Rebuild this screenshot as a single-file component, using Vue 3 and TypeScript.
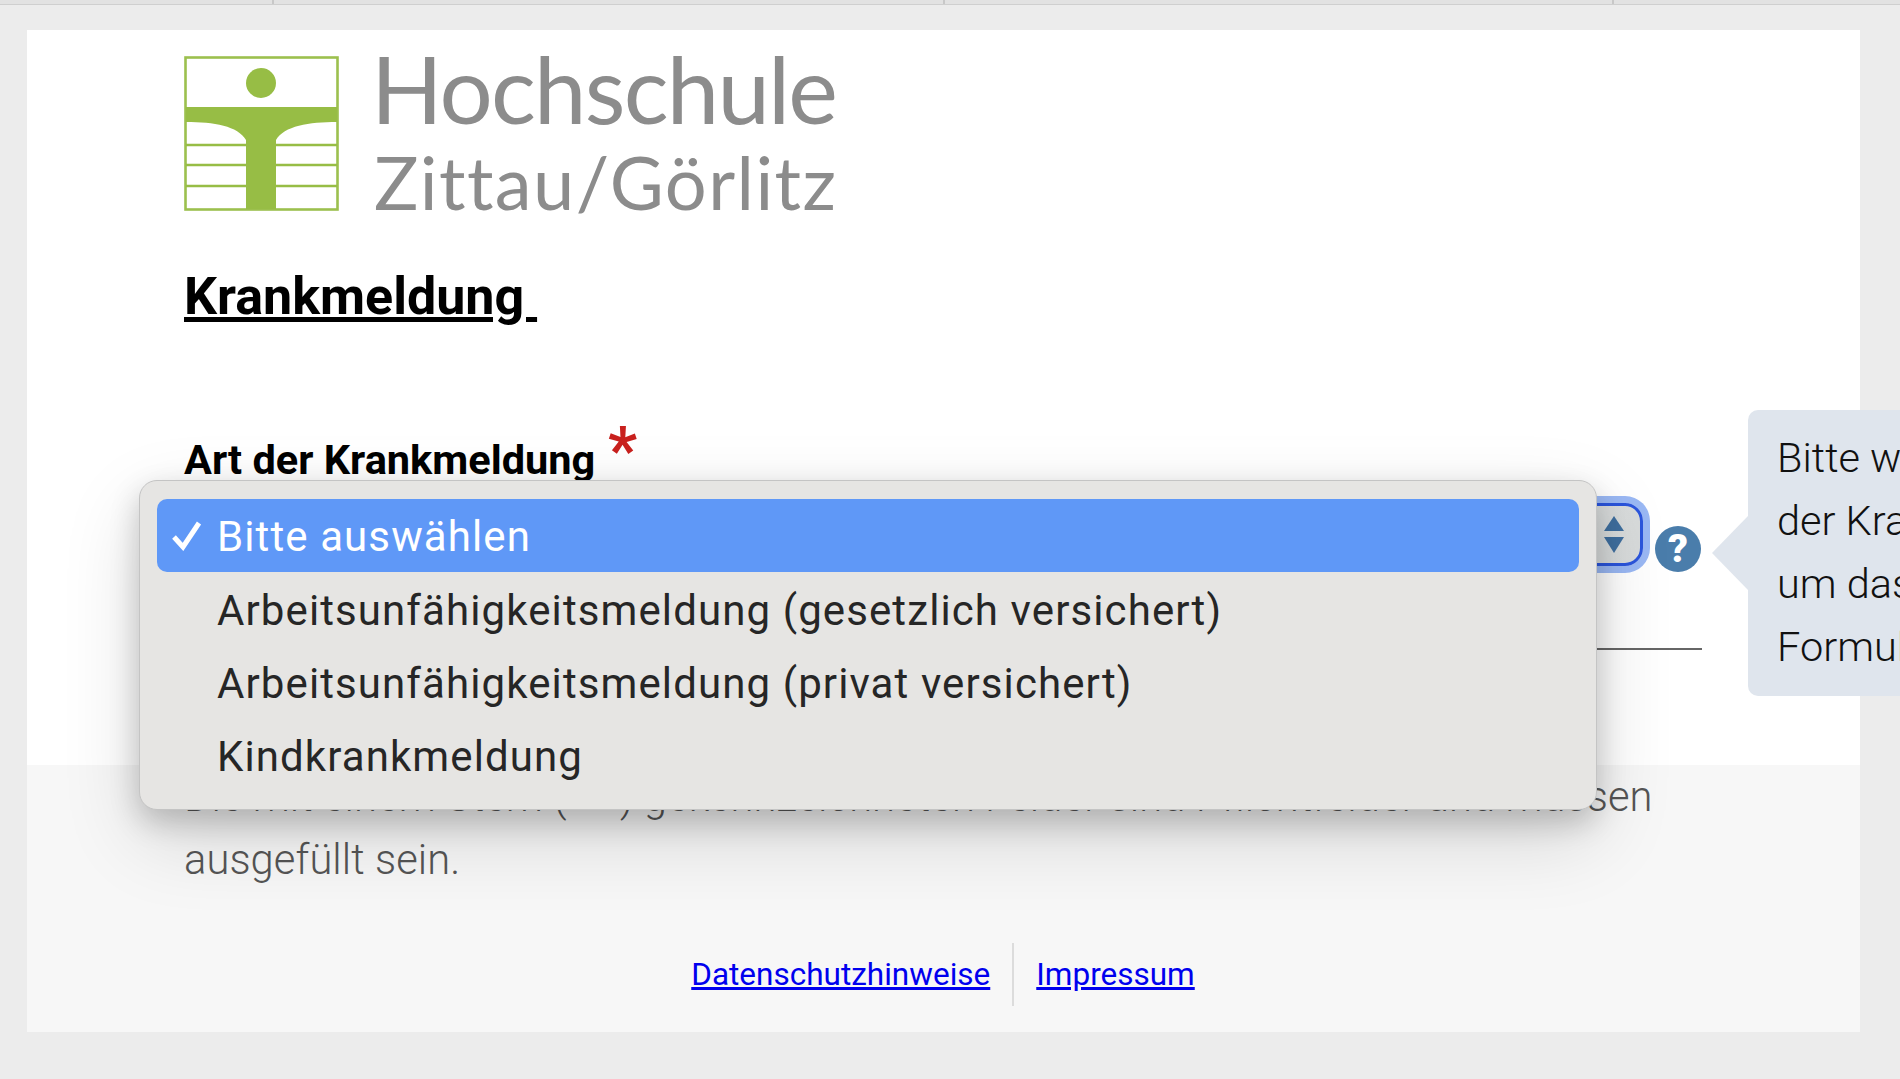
<script setup lang="ts">
const options: string[] = [
  'Bitte auswählen',
  'Arbeitsunfähigkeitsmeldung (gesetzlich versichert)',
  'Arbeitsunfähigkeitsmeldung (privat versichert)',
  'Kindkrankmeldung',
]
const tabs: number[] = [1, 2, 3, 4]
</script>

<template>
  <div class="page">
    <div class="tabs">
      <span v-for="t in tabs" :key="t" class="tab"></span>
    </div>
    <div class="card">
      <main class="main">
        <header class="logo">
          <svg class="logo-mark" viewBox="0 0 155 155" width="155" height="155" aria-hidden="true">
            <rect x="1.5" y="1.5" width="152" height="152" fill="#fff" stroke="#9cc04e" stroke-width="2.6" />
            <circle cx="77" cy="27" r="15" fill="#97bd45" />
            <path d="M2 51H153V66C125 66 100 70 92 84V153H62V84C54 70 30 66 2 66Z" fill="#97bd45" />
            <path d="M2 89H62M92 89H153M2 109H62M92 109H153M2 130H62M92 130H153" stroke="#97bd45" stroke-width="2.4" fill="none" />
          </svg>
          <div class="logo-text">
            <span class="logo-top">Hochschule</span>
            <span class="logo-bottom">Zittau/Görlitz</span>
          </div>
        </header>

        <h1 class="title">Krankmeldung&nbsp;</h1>

        <section class="field">
          <label class="label">Art der Krankmeldung <span class="req">*</span></label>
          <div class="row">
            <div class="select">
              <span class="stepper">
                <svg viewBox="0 0 20 38" width="20" height="38" aria-hidden="true">
                  <path d="M10 0L20 15H0Z" fill="#3f6f9f" />
                  <path d="M10 37L20 21H0Z" fill="#3f6f9f" />
                </svg>
              </span>
            </div>
            <span class="help">?</span>
          </div>

          <div class="popup">
            <div v-for="(o, i) in options" :key="o" class="option" :class="{ active: i === 0 }">
              <svg v-if="i === 0" class="check" viewBox="0 0 30 30" width="30" height="30" aria-hidden="true">
                <path d="M2 16L11 26L27 2" fill="none" stroke="#fff" stroke-width="5" />
              </svg>
              <span>{{ o }}</span>
            </div>
          </div>

          <div class="tooltip">
            Bitte wählen Sie die Art<br />
            der Krankmeldung aus,<br />
            um das entsprechende<br />
            Formular anzuzeigen.
          </div>
        </section>
      </main>

      <footer class="footer">
        <p class="note">Die mit einem Stern (***) gekennzeichneten Felder sind Pflichtfelder und müssen ausgefüllt sein.</p>
        <nav class="links">
          <a href="#" class="link">Datenschutzhinweise</a>
          <a href="#" class="link second">Impressum</a>
        </nav>
      </footer>
    </div>
  </div>
</template>

<style>
html, body { margin: 0; background: #ececec; overflow: hidden; }
</style>

<style scoped>
.page {
  width: 1900px;
  height: 1079px;
  overflow: hidden;
  background: #ececec;
  font-family: Roboto, "Liberation Sans", sans-serif;
}
.tabs {
  display: grid;
  grid-template-columns: 274px 671px 669px 1fr;
  height: 4px;
  background: #e2e2e2;
  border-bottom: 1px solid #cfcfcf;
}
.tab { border-right: 2px solid #c8c8c8; }
.tab:last-child { border-right: 0; }
.card {
  width: 1833px;
  margin: 25px 0 0 27px;
}
.main {
  box-sizing: border-box;
  height: 736px;
  background: #fff;
  padding: 26px 0 0 157px;
}
.logo {
  display: flex;
  gap: 32px;
  height: 155px;
}
.logo-mark { flex: none; }
.logo-text {
  display: flex;
  flex-direction: column;
  color: #8c8c8c;
  font-family: Lato, "Open Sans", sans-serif;
}
.logo-top {
  font-size: 94px;
  line-height: 66px;
  letter-spacing: -1.8px;
  margin-top: -4px;
  padding-top: 3px;
}
.logo-bottom {
  font-size: 74px;
  line-height: 66px;
  letter-spacing: 1.4px;
  margin: 28px 0 0 3px;
}
.title {
  margin: 58px 0 0;
  font-size: 52px;
  line-height: 56px;
  font-weight: 700;
  color: #000;
  text-decoration: underline;
  white-space: pre;
}
.field {
  position: relative;
  width: 1518px;
  margin-top: 110px;
  padding-bottom: 76px;
  border-bottom: 2px solid #666;
}
.label {
  display: block;
  font-size: 41.5px;
  line-height: 46px;
  font-weight: 700;
  color: #000;
  position: relative;
  top: 2px;
}
.req {
  position: absolute;
  left: 424px;
  top: -18px;
  font-size: 64px;
  line-height: 64px;
  color: #c9211e;
}
.row {
  display: flex;
  align-items: flex-start;
  margin-top: 22px;
}
.select {
  box-sizing: border-box;
  display: flex;
  justify-content: flex-end;
  align-items: center;
  width: 1459px;
  height: 63px;
  padding-right: 16px;
  border: 3px solid #2b55dc;
  border-radius: 18px;
  background: linear-gradient(90deg, #e4e6e5, #f1f2f2 40%, #d8dbdb);
  box-shadow: 0 0 0 7px #9ab8f4;
}
.stepper { display: flex; }
.help {
  flex: none;
  width: 46px;
  height: 46px;
  margin: 23px 0 0 12px;
  border-radius: 50%;
  background: #4a7dab;
  color: #fff;
  font-size: 39px;
  font-weight: 900;
  line-height: 46px;
  text-align: center;
}
.popup {
  position: absolute;
  left: -45px;
  top: 45px;
  box-sizing: border-box;
  width: 1458px;
  height: 330px;
  padding: 18px 17px 0 17px;
  background: #e6e5e3;
  border: 1px solid #c4c4c4;
  border-radius: 18px;
  box-shadow: 0 12px 30px rgba(0, 0, 0, 0.2), 0 28px 80px rgba(0, 0, 0, 0.14);
}
.option {
  position: relative;
  height: 73.4px;
  padding-left: 60px;
  display: flex;
  align-items: center;
  border-radius: 10px;
  font-size: 42px;
  letter-spacing: 1.1px;
  color: #262626;
}
.option span { position: relative; top: 1px; }
.option.active {
  background: #5f98f7;
  color: #fff;
}
.check {
  position: absolute;
  left: 15px;
  top: 22px;
}
.tooltip {
  position: absolute;
  left: 1564px;
  top: -25px;
  box-sizing: border-box;
  width: 520px;
  height: 286px;
  padding: 16px 0 0 29px;
  background: #dfe5ed;
  border-radius: 10px;
  font-size: 41.5px;
  line-height: 63px;
  font-weight: 300;
  color: #111;
  white-space: nowrap;
}
.tooltip::before {
  content: "";
  position: absolute;
  left: -36px;
  top: 106px;
  border-style: solid;
  border-width: 37px 36px 37px 0;
  border-color: transparent #dfe5ed transparent transparent;
}
.footer {
  box-sizing: border-box;
  height: 267px;
  background: #f7f7f7;
  padding: 0 170px 0 157px;
}
.note {
  margin: -1px 0 1px;
  font-size: 41.7px;
  line-height: 63px;
  font-weight: 300;
  letter-spacing: 0.08px;
  color: #555;
}
.links {
  display: flex;
  justify-content: center;
  margin-top: 52px;
  padding-left: 12px;
}
.link {
  padding: 0 22px;
  font-size: 31.5px;
  line-height: 63px;
  color: #0000ee;
}
.second { border-left: 2px solid #dcdcdc; }
</style>
